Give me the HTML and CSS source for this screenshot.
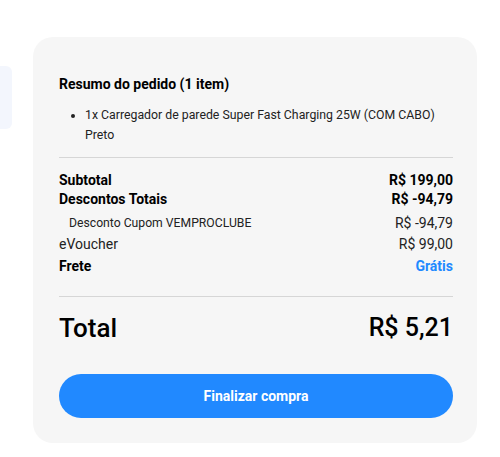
FILE: index.html
```html
<!DOCTYPE html>
<html>
<head>
<title>Resumo do pedido</title>
<link rel="stylesheet" href="styles.css">
</head>
<body>
<div class="page">
  <div class="stub"></div>
  <div class="card">
    <h2 class="title">Resumo do pedido (1 item)</h2>
    <ul class="items">
      <li>1x Carregador de parede Super Fast Charging 25W (COM CABO) Preto</li>
    </ul>
    <hr class="rule">
    <div class="rows">
      <div class="row strong"><span>Subtotal</span><span>R$ 199,00</span></div>
      <div class="row strong"><span>Descontos Totais</span><span>R$ -94,79</span></div>
      <div class="row sub"><span>Desconto Cupom VEMPROCLUBE</span><span class="amount">R$ -94,79</span></div>
      <div class="row plain"><span>eVoucher</span><span>R$ 99,00</span></div>
      <div class="row strong last"><span>Frete</span><span class="free">Grátis</span></div>
    </div>
    <hr class="rule">
    <div class="total"><span>Total</span><span>R$ 5,21</span></div>
    <button class="buy">Finalizar compra</button>
  </div>
</div>
</body>
</html>
```

FILE: styles.css
```css
body {margin: 0;background: #fff;font-family: Roboto, "Noto Sans", sans-serif;color: #000;}
.page {display: flex;align-items: flex-start;}
.stub {width: 12px;height: 63px;margin-top: 66px;background: #f3f6fd;border-radius: 0 6px 6px 0;}
.card {margin: 37px 0 0 21px;width: 444px;box-sizing: border-box;padding: 38px 24px 25px 26px;background: #f6f6f6;border-radius: 20px;}
.title {margin: 0;font-size: 14px;line-height: 18px;font-weight: 700;}
.items {margin: 12px 0 0;padding: 0 0 0 26px;font-size: 12.3px;line-height: 20px;color: #222;}
.items li {padding-right: 10px;}
.rule {margin: 12px 0 0;border: 0;border-top: 1px solid #d6d6d6;}
.rows {margin-top: 13px;}
.row {display: flex;justify-content: space-between;}
.row.strong {font-size: 14px;line-height: 19px;font-weight: 700;}
.row.sub {margin-top: 4px;padding-left: 10px;font-size: 12.2px;line-height: 21px;color: #222;}
.row.sub .amount {font-size: 14px;}
.row.plain {font-size: 14px;line-height: 21px;color: #222;}
.row.last {line-height: 22px;}
.free {color: #2189ff;}
.rows + .rule {margin-top: 19px;}
.total {display: flex;justify-content: space-between;margin-top: 16px;font-size: 25px;line-height: 30px;font-weight: 500;}
.total span:first-child {font-size: 26px;}
.buy {display: block;width: 100%;height: 44px;margin-top: 31px;border: 0;border-radius: 22px;background: #2189ff;color: #fff;font-family: inherit;font-size: 14px;font-weight: 700;cursor: pointer;}
```
